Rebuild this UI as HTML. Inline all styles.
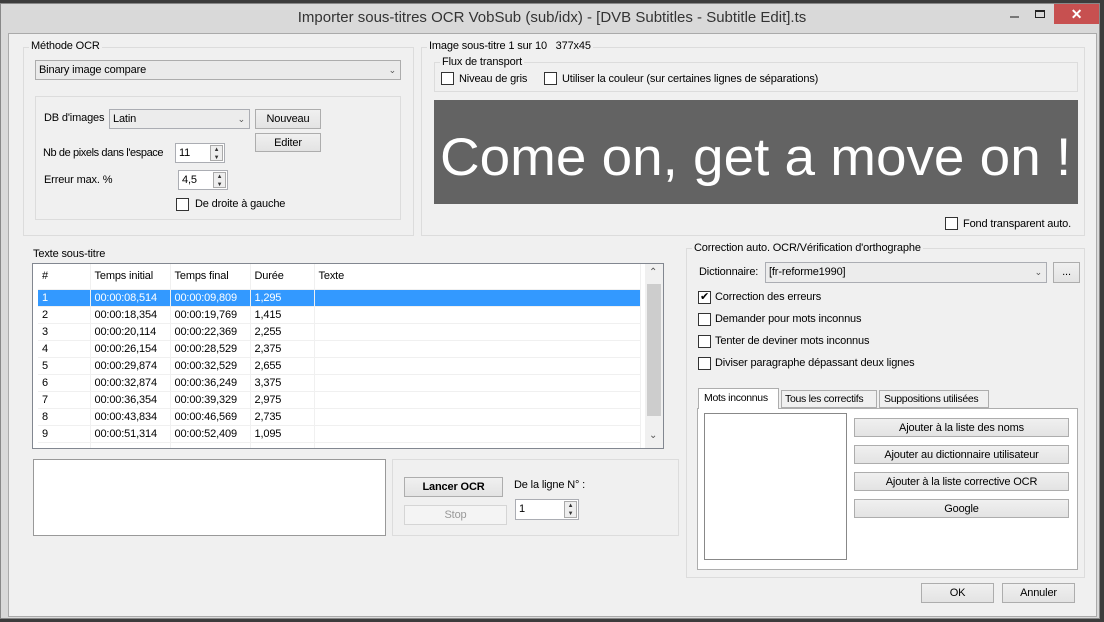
<!DOCTYPE html><html><head><meta charset="utf-8"><style>
*{box-sizing:border-box}
body{margin:0;width:1104px;height:622px;background:#3c3c3c;font-family:"Liberation Sans",sans-serif;font-size:11px;letter-spacing:-0.15px;color:#000;position:relative;overflow:hidden}
.a{position:absolute}
.win{left:0;top:3px;width:1100px;height:616px;background:#d9d9d9;border:1px solid #888}
.cont{left:8px;top:33px;width:1089px;height:584px;background:#f0f0f0;border:1px solid #aaa}
.grp{position:absolute;border:1px solid #dcdcdc}
.lbl{position:absolute;background:#f0f0f0;padding:0 2px;white-space:nowrap}
.t{position:absolute;white-space:nowrap}
.btn{position:absolute;background:linear-gradient(#f0f0f0,#e3e3e3);border:1px solid #adadad;text-align:center;line-height:18px;white-space:nowrap}
.inp{position:absolute;background:#fff;border:1px solid #abadb3;padding-left:3px;line-height:18px}
.cb{position:absolute;width:13px;height:13px;border:1px solid #333;background:#fff}
.arr{position:absolute;right:4px;top:0;font-size:9px;color:#555}
.spin{position:absolute;right:1px;top:1px;width:13px;bottom:1px;border:1px solid #aaa;background:#eee;font-size:6px;line-height:8px;text-align:center;color:#333}
table{border-collapse:collapse;font-size:11px}
td{height:17px;padding:0 0 0 4px;border-right:1px solid #f0f0f0;border-bottom:1px solid #f0f0f0;white-space:nowrap}
</style></head><body>
<div class="a win"></div>
<div class="t" style="left:0;width:1104px;top:9px;text-align:center;font-size:15px;color:#333;letter-spacing:0">Importer sous-titres OCR VobSub (sub/idx) - [DVB Subtitles - Subtitle Edit].ts</div>
<div class="a" style="left:1010px;top:16px;width:9px;height:2px;background:#777"></div>
<div class="a" style="left:1035px;top:10px;width:10px;height:8px;border:1px solid #222;border-top-width:2px"></div>
<div class="a" style="left:1054px;top:4px;width:45px;height:20px;background:#c75050;color:#fff;text-align:center;font-size:14px;line-height:20px;font-weight:bold">✕</div>
<div class="a cont"></div>

<div class="grp" style="left:23px;top:47px;width:391px;height:189px"></div>
<div class="lbl" style="left:29px;top:40px">Méthode OCR</div>
<div class="inp" style="left:35px;top:60px;width:366px;height:20px;background:#eaeaea;border-color:#acacac">Binary image compare<span class="arr">&#8964;</span></div>
<div class="grp" style="left:35px;top:96px;width:366px;height:124px"></div>
<div class="t" style="left:44px;top:112px">DB d'images</div>
<div class="inp" style="left:109px;top:109px;width:141px;height:20px;background:#ececec">Latin<span class="arr">&#8964;</span></div>
<div class="btn" style="left:255px;top:109px;width:66px;height:20px">Nouveau</div>
<div class="btn" style="left:255px;top:133px;width:66px;height:19px">Editer</div>
<div class="t" style="left:43px;top:147px;letter-spacing:-0.4px">Nb de pixels dans l'espace</div>
<div class="inp" style="left:175px;top:143px;width:50px;height:20px">11<div class="spin">▲<br>▼</div></div>
<div class="t" style="left:44px;top:174px">Erreur max. %</div>
<div class="inp" style="left:178px;top:170px;width:50px;height:20px">4,5<div class="spin">▲<br>▼</div></div>
<div class="cb" style="left:176px;top:198px"></div>
<div class="t" style="left:195px;top:198px">De droite à gauche</div>

<div class="grp" style="left:421px;top:47px;width:664px;height:189px"></div>
<div class="lbl" style="left:427px;top:40px">Image sous-titre 1 sur 10 &nbsp; 377x45</div>
<div class="grp" style="left:434px;top:62px;width:644px;height:30px"></div>
<div class="lbl" style="left:440px;top:56px">Flux de transport</div>
<div class="cb" style="left:441px;top:72px"></div><div class="t" style="left:459px;top:73px">Niveau de gris</div>
<div class="cb" style="left:544px;top:72px"></div><div class="t" style="left:562px;top:73px">Utiliser la couleur (sur certaines lignes de séparations)</div>
<div class="a" style="left:434px;top:100px;width:644px;height:104px;background:#636363"></div>
<div class="t" style="left:440px;top:127px;font-size:53px;color:#fff;letter-spacing:0;transform:scaleX(1.035);transform-origin:0 0">Come on, get a move on !</div>
<div class="cb" style="left:945px;top:217px"></div><div class="t" style="left:963px;top:218px">Fond transparent auto.</div>

<div class="t" style="left:33px;top:248px">Texte sous-titre</div>
<div class="a" style="left:32px;top:263px;width:632px;height:186px;background:#fff;border:1px solid #828790;overflow:hidden">
<div class="a" style="left:612px;top:0;width:18px;height:184px;background:#f0f0f0"></div>
<div class="a" style="left:614px;top:20px;width:14px;height:132px;background:#cdcdcd"></div>
<div class="t" style="left:616px;top:3px;font-size:10px;color:#555">&#8963;</div>
<div class="t" style="left:616px;top:166px;font-size:10px;color:#555">&#8964;</div>
<table style="position:absolute;left:5px;top:0;width:603px">
<tr style="height:25px"><td style="width:52px;height:25px">#</td><td style="width:80px">Temps initial</td><td style="width:80px">Temps final</td><td style="width:64px">Durée</td><td>Texte</td></tr>
<tr style="background:#3399ff;color:#fff"><td>1</td><td>00:00:08,514</td><td>00:00:09,809</td><td>1,295</td><td></td></tr>
<tr><td>2</td><td>00:00:18,354</td><td>00:00:19,769</td><td>1,415</td><td></td></tr>
<tr><td>3</td><td>00:00:20,114</td><td>00:00:22,369</td><td>2,255</td><td></td></tr>
<tr><td>4</td><td>00:00:26,154</td><td>00:00:28,529</td><td>2,375</td><td></td></tr>
<tr><td>5</td><td>00:00:29,874</td><td>00:00:32,529</td><td>2,655</td><td></td></tr>
<tr><td>6</td><td>00:00:32,874</td><td>00:00:36,249</td><td>3,375</td><td></td></tr>
<tr><td>7</td><td>00:00:36,354</td><td>00:00:39,329</td><td>2,975</td><td></td></tr>
<tr><td>8</td><td>00:00:43,834</td><td>00:00:46,569</td><td>2,735</td><td></td></tr>
<tr><td>9</td><td>00:00:51,314</td><td>00:00:52,409</td><td>1,095</td><td></td></tr>
<tr><td></td><td></td><td></td><td></td><td></td></tr>
</table></div>

<div class="a" style="left:33px;top:459px;width:353px;height:77px;background:#fff;border:1px solid #999"></div>
<div class="grp" style="left:392px;top:459px;width:287px;height:77px"></div>
<div class="btn" style="left:404px;top:477px;width:99px;height:20px;font-weight:bold">Lancer OCR</div>
<div class="btn" style="left:404px;top:505px;width:103px;height:20px;color:#999;border-color:#d5d5d5;background:#f4f4f4">Stop</div>
<div class="t" style="left:514px;top:479px">De la ligne N° :</div>
<div class="inp" style="left:515px;top:499px;width:64px;height:21px">1<div class="spin">▲<br>▼</div></div>

<div class="grp" style="left:686px;top:248px;width:399px;height:330px"></div>
<div class="lbl" style="left:692px;top:242px">Correction auto. OCR/Vérification d'orthographe</div>
<div class="t" style="left:699px;top:266px">Dictionnaire:</div>
<div class="inp" style="left:765px;top:262px;width:282px;height:21px;background:#ececec">[fr-reforme1990]<span class="arr">&#8964;</span></div>
<div class="btn" style="left:1053px;top:262px;width:27px;height:21px">...</div>
<div class="cb" style="left:698px;top:291px;font-size:11px;line-height:11px;text-align:center">✔</div><div class="t" style="left:715px;top:291px">Correction des erreurs</div>
<div class="cb" style="left:698px;top:313px"></div><div class="t" style="left:715px;top:313px">Demander pour mots inconnus</div>
<div class="cb" style="left:698px;top:335px"></div><div class="t" style="left:715px;top:335px">Tenter de deviner mots inconnus</div>
<div class="cb" style="left:698px;top:357px"></div><div class="t" style="left:715px;top:357px">Diviser paragraphe dépassant deux lignes</div>
<div class="a" style="left:697px;top:408px;width:381px;height:162px;background:#fff;border:1px solid #adadad"></div>
<div class="a" style="left:698px;top:388px;width:81px;height:21px;background:#fff;border:1px solid #adadad;border-bottom:none;padding:3px 0 0 5px;white-space:nowrap;font-size:10.5px;letter-spacing:-0.3px">Mots inconnus</div>
<div class="a" style="left:781px;top:390px;width:96px;height:18px;background:#f0f0f0;border:1px solid #adadad;padding:2px 0 0 3px;white-space:nowrap;font-size:10.5px;letter-spacing:-0.3px">Tous les correctifs</div>
<div class="a" style="left:879px;top:390px;width:110px;height:18px;background:#f0f0f0;border:1px solid #adadad;padding:2px 0 0 4px;white-space:nowrap;font-size:10.5px;letter-spacing:-0.3px">Suppositions utilisées</div>
<div class="a" style="left:704px;top:413px;width:143px;height:147px;border:1px solid #888;background:#fff"></div>
<div class="btn" style="left:854px;top:418px;width:215px;height:19px">Ajouter à la liste des noms</div>
<div class="btn" style="left:854px;top:445px;width:215px;height:19px">Ajouter au dictionnaire utilisateur</div>
<div class="btn" style="left:854px;top:472px;width:215px;height:19px">Ajouter à la liste corrective OCR</div>
<div class="btn" style="left:854px;top:499px;width:215px;height:19px">Google</div>
<div class="btn" style="left:921px;top:583px;width:73px;height:20px">OK</div>
<div class="btn" style="left:1002px;top:583px;width:73px;height:20px">Annuler</div>
</body></html>
